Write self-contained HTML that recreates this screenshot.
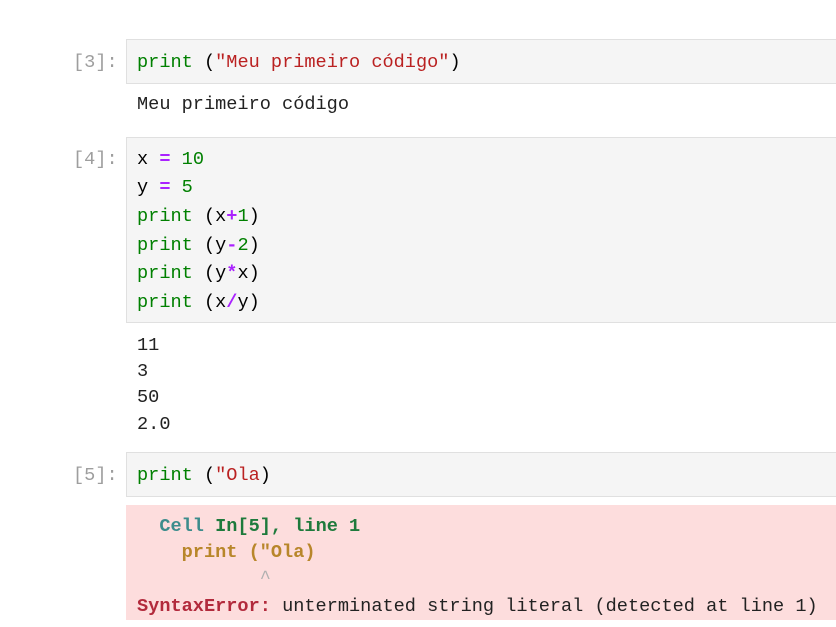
<!DOCTYPE html>
<html><head><meta charset="utf-8"><style>
body{margin:0;width:836px;height:627px;background:#fff;position:relative;overflow:hidden;font-family:"Liberation Mono",monospace;font-size:18.6px;}
.l{position:absolute;white-space:pre;line-height:22px;}
.p{color:#9e9e9e;left:73px}
.box{position:absolute;left:126px;width:720px;background:#f5f5f5;border:1px solid #e0e0e0;box-sizing:border-box}
.g{color:#008000}.s{color:#ba2121}.o{color:#aa22ff;font-weight:bold}.n{color:#008000}
.t{color:#222}
</style></head><body>
<div class="box" style="top:39px;height:45px"></div>
<div class="l p" style="top:52px">[3]:</div>
<div class="l" style="left:137px;top:52px"><span class="g">print</span> (<span class="s">"Meu primeiro código"</span>)</div>
<div class="l t" style="left:137px;top:94px">Meu primeiro código</div>

<div class="box" style="top:137px;height:186px"></div>
<div class="l p" style="top:149px">[4]:</div>
<div class="l" style="left:137px;top:149px">x <span class="o">=</span> <span class="n">10</span></div>
<div class="l" style="left:137px;top:177px">y <span class="o">=</span> <span class="n">5</span></div>
<div class="l" style="left:137px;top:206px"><span class="g">print</span> (x<span class="o">+</span><span class="n">1</span>)</div>
<div class="l" style="left:137px;top:235px"><span class="g">print</span> (y<span class="o">-</span><span class="n">2</span>)</div>
<div class="l" style="left:137px;top:263px"><span class="g">print</span> (y<span class="o">*</span>x)</div>
<div class="l" style="left:137px;top:292px"><span class="g">print</span> (x<span class="o">/</span>y)</div>

<div class="l t" style="left:137px;top:335px">11</div>
<div class="l t" style="left:137px;top:361px">3</div>
<div class="l t" style="left:137px;top:387px">50</div>
<div class="l t" style="left:137px;top:414px">2.0</div>

<div class="box" style="top:452px;height:45px"></div>
<div class="l p" style="top:465px">[5]:</div>
<div class="l" style="left:137px;top:465px"><span class="g">print</span> (<span class="s">"Ola</span>)</div>

<div style="position:absolute;left:126px;top:505px;width:720px;height:115px;background:#fddddd"></div>
<div class="l" style="left:137px;top:516px;font-weight:bold">  <span style="color:#3c8c8c">Cell</span> <span style="color:#1e7a3c">In[5], line 1</span></div>
<div class="l" style="left:137px;top:542px;font-weight:bold;color:#b8862a">    print ("Ola)</div>
<div class="l" style="left:137px;top:568px;color:#b0b0b0">           ^</div>
<div class="l t" style="left:137px;top:596px"><span style="color:#b22a3c;font-weight:bold">SyntaxError:</span> unterminated string literal (detected at line 1)</div>
</body></html>
